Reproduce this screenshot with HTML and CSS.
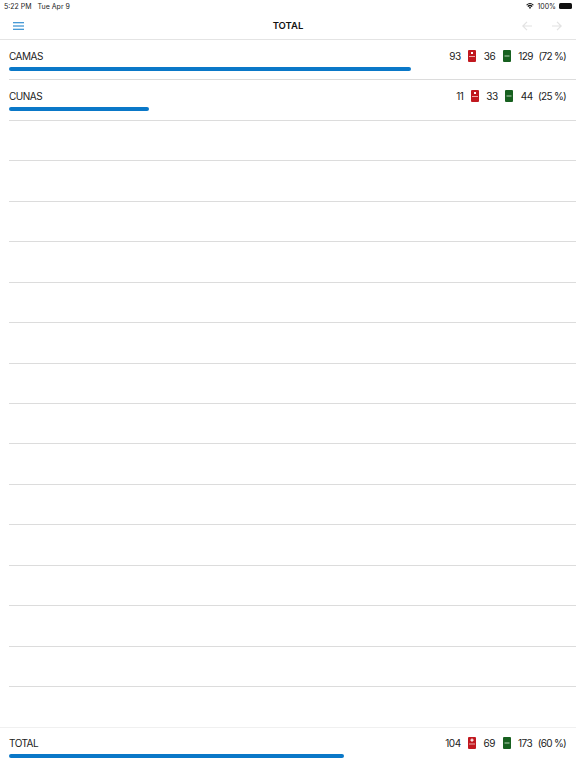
FILE: index.html
```html
<!DOCTYPE html>
<html lang="en">
<head>
    <meta charset="UTF-8">
    <meta name="viewport" content="width=device-width, initial-scale=1.0">
    <title>Total</title>
    <link rel="stylesheet" href="styles.css">
</head>
<body>
    <div class="status-bar">
        <span class="status-time">5:22 PM</span>
        <span class="status-date">Tue Apr 9</span>
        <span class="status-right">
            <svg class="wifi" width="8" height="6" viewBox="0 0 10 8"><path d="M5 8 3.4 6.1a2.4 2.4 0 0 1 3.2 0zM2.6 5.2 1.5 4a5.2 5.2 0 0 1 7 0L7.4 5.2a3.7 3.7 0 0 0-4.8 0zM.9 3.3 0 2.2a7.6 7.6 0 0 1 10 0l-.9 1.1a6.2 6.2 0 0 0-8.2 0z" fill="#111"/></svg>
            <span>100%</span>
            <span class="battery"></span>
        </span>
    </div>

    <div class="nav-bar">
        <svg class="menu-icon" width="11" height="8" viewBox="0 0 11 8"><path d="M0 .7h11M0 4h11M0 7.3h11" stroke="#0a78c8" stroke-width="1.1" fill="none"/></svg>
        <h1 class="nav-title">TOTAL</h1>
        <div class="nav-arrows">
            <svg width="10" height="10" viewBox="0 0 10 10"><path d="M10 5H1M5 .8.8 5 5 9.2" stroke="#e2e2e2" stroke-width="1.2" fill="none"/></svg>
            <svg width="10" height="10" viewBox="0 0 10 10"><path d="M0 5h9M5 .8 9.2 5 5 9.2" stroke="#e2e2e2" stroke-width="1.2" fill="none"/></svg>
        </div>
    </div>

    <div class="list">
        <div class="row">
            <div class="row-top">
                <span class="row-name">CAMAS</span>
                <div class="stats">
                    <span>93</span>
                    <svg class="bed" width="8" height="12" viewBox="0 0 8 12"><rect width="8" height="12" rx="1" fill="#c1181f"/><rect x="1" y="6" width="6" height="1" fill="#eaa"/><rect x="3" y="2" width="2" height="2" fill="#fff"/></svg>
                    <span>36</span>
                    <svg class="bed" width="8" height="12" viewBox="0 0 8 12"><rect width="8" height="12" rx="1" fill="#17601f"/><rect x="1.5" y="5.5" width="5" height="1" fill="#b5d0b5"/></svg>
                    <span>129</span>
                    <span class="pct">(72 %)</span>
                </div>
            </div>
            <div class="bar" style="width: 402px"></div>
        </div>
        <div class="row">
            <div class="row-top">
                <span class="row-name">CUNAS</span>
                <div class="stats">
                    <span>11</span>
                    <svg class="bed" width="8" height="12" viewBox="0 0 8 12"><rect width="8" height="12" rx="1" fill="#c1181f"/><rect x="1" y="6" width="6" height="1" fill="#eaa"/><rect x="3" y="2" width="2" height="2" fill="#fff"/></svg>
                    <span>33</span>
                    <svg class="bed" width="8" height="12" viewBox="0 0 8 12"><rect width="8" height="12" rx="1" fill="#17601f"/><rect x="1.5" y="5.5" width="5" height="1" fill="#b5d0b5"/></svg>
                    <span>44</span>
                    <span class="pct">(25 %)</span>
                </div>
            </div>
            <div class="bar" style="width: 139.5px"></div>
        </div>
        <div class="row"></div>
        <div class="row"></div>
        <div class="row"></div>
        <div class="row"></div>
        <div class="row"></div>
        <div class="row"></div>
        <div class="row"></div>
        <div class="row"></div>
        <div class="row"></div>
        <div class="row"></div>
        <div class="row"></div>
        <div class="row"></div>
        <div class="row"></div>
        <div class="row"></div>
    </div>

    <div class="footer">
        <div class="row-top">
            <span class="row-name">TOTAL</span>
            <div class="stats">
                <span>104</span>
                <svg class="bed" width="8" height="12" viewBox="0 0 8 12"><rect width="8" height="12" rx="1" fill="#c1181f"/><rect x="1" y="6.5" width="6" height="1" fill="#eaa"/><path d="M3.4 1.5h1.2v1h1v1.2h-1v1H3.4v-1h-1V2.5h1z" fill="#fff"/></svg>
                <span>69</span>
                <svg class="bed" width="8" height="12" viewBox="0 0 8 12"><rect width="8" height="12" rx="1" fill="#17601f"/><rect x="1.5" y="5.5" width="5" height="1" fill="#b5d0b5"/></svg>
                <span>173</span>
                <span class="pct">(60 %)</span>
            </div>
        </div>
        <div class="bar footer-bar" style="width: 335px"></div>
    </div>
</body>
</html>
```

FILE: styles.css
```css
html, body { margin: 0; padding: 0; }
body { width: 576px; height: 768px; overflow: hidden; background: #fff; color: #222; font-family: Inter, "Liberation Sans", Arial, sans-serif; display: flex; flex-direction: column; }

.status-bar { height: 12px; display: flex; align-items: center; font-size: 7px; color: #222; padding: 0 4px; }
.status-date { margin-left: 6px; }
.status-right { margin-left: auto; display: flex; align-items: center; gap: 3px; }
.battery { width: 13px; height: 6px; border-radius: 1.5px; background: #111; }

.nav-bar { height: 27px; display: flex; align-items: center; justify-content: center; position: relative; border-bottom: 1px solid #e4e4e4; }
.nav-title { margin: 0; font-size: 9.5px; font-weight: 600; color: #111; }
.menu-icon { position: absolute; left: 13px; top: 10px; }
.nav-arrows { position: absolute; right: 14px; top: 9px; display: flex; gap: 20px; }

.list { flex: 1; padding-left: 9px; }
.row { height: 39.45px; border-bottom: 1px solid #dcdcdc; padding-right: 9px; }
.row-top { display: flex; justify-content: space-between; align-items: center; padding-top: 9px; height: 14px; font-size: 10px; letter-spacing: -0.5px; }
.row-name { color: #222; }
.stats { display: flex; align-items: center; gap: 7.5px; padding-right: 1px; }
.pct { margin-left: -2px; letter-spacing: -0.7px; }
.bar { height: 4px; margin-top: 4px; background: #0a78c8; border-radius: 2px; }
.footer-bar { margin-top: 4px; }

.footer { height: 40px; border-top: 1px solid #f0f0f0; padding: 0 9px; }
.footer .row-top { padding-top: 8px; }
```
